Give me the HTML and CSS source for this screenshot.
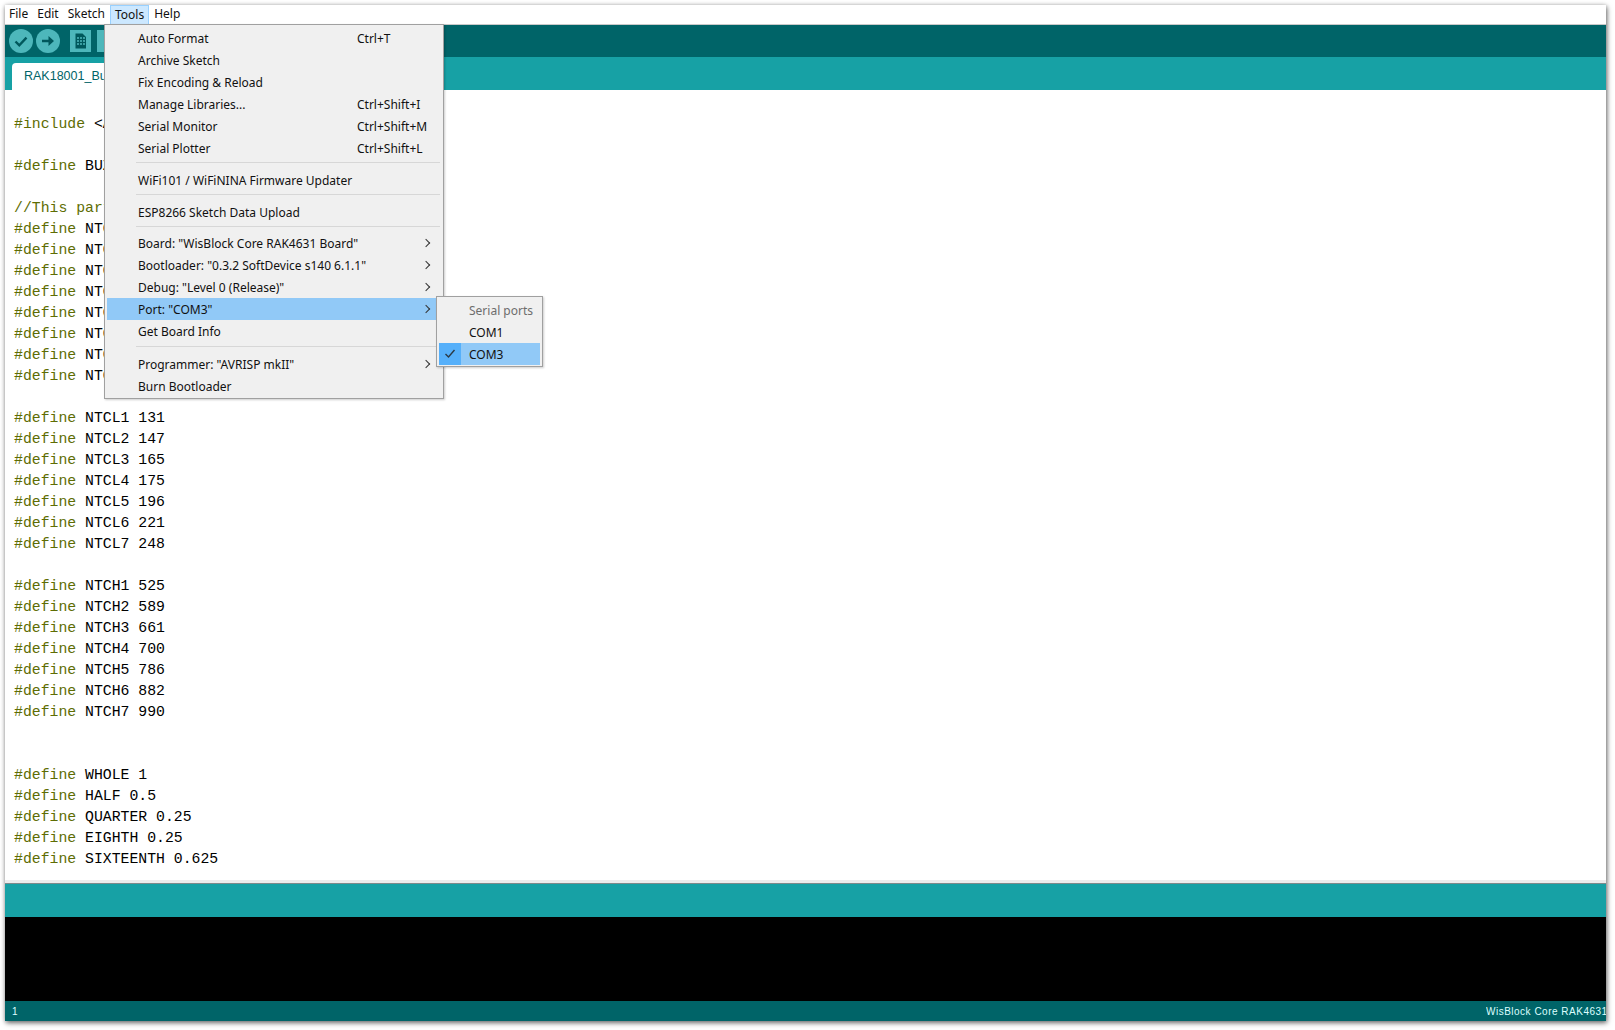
FILE: index.html
```html
<!DOCTYPE html>
<html lang="en">
<head>
<meta charset="utf-8">
<title>RAK18001_Buzzer | Arduino</title>
<link rel="stylesheet" href="styles.css">
</head>
<body>
<div class="window">
  <nav class="menubar">
    <span class="mb-item">File</span>
    <span class="mb-item">Edit</span>
    <span class="mb-item">Sketch</span>
    <span class="mb-item mb-open">Tools</span>
    <span class="mb-item">Help</span>
  </nav>
  <div class="toolbar">
    <svg class="tb-round" viewBox="0 0 24 24"><circle cx="12" cy="12" r="12" fill="#4db7bb"/><path d="M6.5 12.5l3.8 3.8 7.2-7.6" fill="none" stroke="#00585c" stroke-width="2.4"/></svg>
    <svg class="tb-round" viewBox="0 0 24 24"><circle cx="12" cy="12" r="12" fill="#4db7bb"/><path d="M6 10.7h6.5V7l5.5 5-5.5 5v-3.7H6z" fill="#00585c"/></svg>
    <svg class="tb-square" viewBox="0 0 21 22"><rect width="21" height="22" fill="#4db7bb"/><path d="M5.500 3.500h7l3.500 3.500v11.500h-10.500z" fill="#00585c"/><path d="M7 8h2M10 8h2M13 8h2M7 11h2M10 11h2M13 11h2M7 14h2M10 14h2M13 14h2" stroke="#4db7bb" stroke-width="1.500"/></svg>
    <svg class="tb-square" viewBox="0 0 21 22"><rect width="21" height="22" fill="#4db7bb"/></svg>
  </div>
  <div class="tabs"><div class="tab">RAK18001_Buzzer</div></div>
  <main class="editor">
    <div class="line"><i>#include</i> &lt;Arduino.h&gt;</div>
    <div class="line">&nbsp;</div>
    <div class="line"><i>#define</i> BUZZER_PIN WB_IO3</div>
    <div class="line">&nbsp;</div>
    <div class="line"><i>//This part defines notes</i></div>
    <div class="line"><i>#define</i> NTC0 -1</div>
    <div class="line"><i>#define</i> NTC1 262</div>
    <div class="line"><i>#define</i> NTC2 294</div>
    <div class="line"><i>#define</i> NTC3 330</div>
    <div class="line"><i>#define</i> NTC4 350</div>
    <div class="line"><i>#define</i> NTC5 393</div>
    <div class="line"><i>#define</i> NTC6 441</div>
    <div class="line"><i>#define</i> NTC7 495</div>
    <div class="line">&nbsp;</div>
    <div class="line"><i>#define</i> NTCL1 131</div>
    <div class="line"><i>#define</i> NTCL2 147</div>
    <div class="line"><i>#define</i> NTCL3 165</div>
    <div class="line"><i>#define</i> NTCL4 175</div>
    <div class="line"><i>#define</i> NTCL5 196</div>
    <div class="line"><i>#define</i> NTCL6 221</div>
    <div class="line"><i>#define</i> NTCL7 248</div>
    <div class="line">&nbsp;</div>
    <div class="line"><i>#define</i> NTCH1 525</div>
    <div class="line"><i>#define</i> NTCH2 589</div>
    <div class="line"><i>#define</i> NTCH3 661</div>
    <div class="line"><i>#define</i> NTCH4 700</div>
    <div class="line"><i>#define</i> NTCH5 786</div>
    <div class="line"><i>#define</i> NTCH6 882</div>
    <div class="line"><i>#define</i> NTCH7 990</div>
    <div class="line">&nbsp;</div>
    <div class="line">&nbsp;</div>
    <div class="line"><i>#define</i> WHOLE 1</div>
    <div class="line"><i>#define</i> HALF 0.5</div>
    <div class="line"><i>#define</i> QUARTER 0.25</div>
    <div class="line"><i>#define</i> EIGHTH 0.25</div>
    <div class="line"><i>#define</i> SIXTEENTH 0.625</div>
  </main>
  <div class="message-bar"></div>
  <div class="console"></div>
  <footer class="status">
    <span>1</span>
    <span class="status-board">WisBlock Core RAK4631 Board</span>
  </footer>

  <div class="menu tools-menu">
    <div class="mi"><span class="mi-label">Auto Format</span><span class="mi-key">Ctrl+T</span></div>
    <div class="mi"><span class="mi-label">Archive Sketch</span></div>
    <div class="mi"><span class="mi-label">Fix Encoding &amp; Reload</span></div>
    <div class="mi"><span class="mi-label">Manage Libraries...</span><span class="mi-key">Ctrl+Shift+I</span></div>
    <div class="mi"><span class="mi-label">Serial Monitor</span><span class="mi-key">Ctrl+Shift+M</span></div>
    <div class="mi"><span class="mi-label">Serial Plotter</span><span class="mi-key">Ctrl+Shift+L</span></div>
    <div class="sep"></div>
    <div class="mi"><span class="mi-label">WiFi101 / WiFiNINA Firmware Updater</span></div>
    <div class="sep"></div>
    <div class="mi"><span class="mi-label">ESP8266 Sketch Data Upload</span></div>
    <div class="sep sep-thin"></div>
    <div class="mi has-sub"><span class="mi-label">Board: "WisBlock Core RAK4631 Board"</span></div>
    <div class="mi has-sub"><span class="mi-label">Bootloader: "0.3.2 SoftDevice s140 6.1.1"</span></div>
    <div class="mi has-sub"><span class="mi-label">Debug: "Level 0 (Release)"</span></div>
    <div class="mi has-sub mi-active"><span class="mi-label">Port: "COM3"</span></div>
    <div class="mi"><span class="mi-label">Get Board Info</span></div>
    <div class="sep sep-wide"></div>
    <div class="mi has-sub"><span class="mi-label">Programmer: "AVRISP mkII"</span></div>
    <div class="mi"><span class="mi-label">Burn Bootloader</span></div>
  </div>

  <div class="menu port-menu">
    <div class="mi mi-sub"><span class="mi-label mi-muted">Serial ports</span></div>
    <div class="mi mi-sub"><span class="mi-label">COM1</span></div>
    <div class="mi mi-sub mi-active">
      <span class="mi-check"><svg class="check" viewBox="0 0 12 10"><path d="M1.500 5l3 3 6-7" fill="none" stroke="#2b3a45" stroke-width="1.400"/></svg></span>
      <span class="mi-label">COM3</span>
    </div>
  </div>
</div>
</body>
</html>
```

FILE: styles.css
```css
* { box-sizing: border-box; }
html, body { margin: 0; height: 100%; background: #fff; overflow: hidden; }
body { padding: 5px 9px 9px 5px; }

.window {
  position: relative;
  height: 1016px;
  display: flex;
  flex-direction: column;
  background: #fff;
  box-shadow: 1px 2px 5px rgba(0, 0, 0, .55), 0 0 4px rgba(0, 0, 0, .18);
  overflow: visible;
}

.menubar {
  height: 20px;
  flex: none;
  display: flex;
  align-items: center;
  padding-left: 0;
  background: #fff;
  border-bottom: 1px solid #c9c9c9;
  font: 12px "Noto Sans", sans-serif;
  color: #111;
}
.mb-item { height: 19px; padding: 0 5px 0 4px; line-height: 18px; }
.mb-open { background: #cce8ff; border: 1px solid #99d1ff; border-bottom: 0; line-height: 17px; padding: 0 4px; margin-right: 1px; }

.toolbar {
  height: 32px;
  flex: none;
  display: flex;
  align-items: center;
  gap: 3px;
  padding-left: 4px;
  background: #006468;
}
.tb-round { width: 24px; height: 24px; flex: none; }
.tb-square { width: 21px; height: 22px; flex: none; margin-left: 3px; }
.tb-round + .tb-square { margin-left: 7px; }

.tabs {
  height: 33px;
  flex: none;
  display: flex;
  align-items: flex-end;
  padding-left: 7px;
  background: #17a1a5;
}
.tab {
  width: 160px;
  height: 27px;
  padding: 5px 0 0 12px;
  background: #fff;
  border-radius: 4px 4px 0 0;
  color: #006468;
  font: 12.500px "Liberation Sans", sans-serif;
  line-height: 16px;
}

.editor {
  flex: 1;
  min-height: 0;
  padding: 24px 0 0 9px;
  overflow: hidden;
  background: #fff;
  border-bottom: 3px solid #ececec;
  font: 14.800px "Liberation Mono", monospace;
  color: #000;
}
.line { height: 21px; line-height: 21px; white-space: pre; }
.line i { font-style: normal; color: #5e6d03; }

.message-bar { height: 34px; flex: none; background: #17a1a5; border-top: 1px solid #7d8a8c; }
.console { height: 84px; flex: none; background: #000; }
.status {
  height: 20px;
  flex: none;
  display: flex;
  justify-content: space-between;
  align-items: center;
  padding-left: 7px;
  overflow: hidden;
  background: #006468;
  color: #dff;
  font: 10px "Liberation Sans", sans-serif;
}
.status-board { width: 120px; white-space: nowrap; overflow: hidden; letter-spacing: .5px; }

.menu {
  position: absolute;
  background: #f0f0f0;
  border: 1px solid #a0a0a0;
  box-shadow: 1px 1px 2px rgba(0, 0, 0, .2);
  font: 12px "Noto Sans", sans-serif;
  color: #111;
}
.tools-menu { left: 99px; top: 19px; width: 340px; height: 375px; padding: 2px; }
.port-menu { left: 431px; top: 291px; width: 107px; height: 71px; padding: 2px; }

.mi { height: 22px; display: flex; align-items: center; position: relative; white-space: nowrap; }
.mi-label { margin-left: 31px; }
.mi-key { position: absolute; left: 250px; }
.has-sub::after {
  content: "";
  position: absolute;
  left: 316px;
  top: 8px;
  width: 5px;
  height: 5px;
  border-top: 1px solid #333;
  border-right: 1px solid #333;
  transform: rotate(45deg);
}
.mi-active { background: #91c9f7; }
.mi-muted { color: #6d6d6d; }
.mi-sub .mi-label { margin-left: 30px; }
.mi-sub { position: relative; }
.mi-check {
  position: absolute;
  left: 0;
  top: 0;
  width: 22px;
  height: 22px;
  display: flex;
  align-items: center;
  justify-content: center;
  background: #56b0fa;
}
.check { width: 12px; height: 10px; }

.sep { height: 10px; padding-top: 3px; margin-left: 29px; }
.sep::before { content: ""; display: block; height: 1px; background: #d7d7d7; margin-right: 1px; }
.sep-thin { height: 9px; }
.sep-wide { height: 11px; padding-top: 4px; }
```
